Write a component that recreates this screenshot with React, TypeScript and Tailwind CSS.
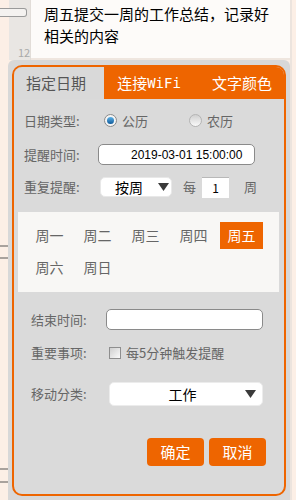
import React from "react";

const weekdays = ["周一", "周二", "周三", "周四", "周五", "周六", "周日"];

function Triangle() {
  return (
    <svg width="11" height="8" viewBox="0 0 11 8" className="shrink-0">
      <path d="M0 0 H11 L5.5 8 Z" fill="#3a3a3a" />
    </svg>
  );
}

function Radio({ checked }: { checked: boolean }) {
  return (
    <span
      className={`flex h-[13px] w-[13px] items-center justify-center rounded-full border ${
        checked ? "border-[#8a8a8a] bg-[#f4f4f4]" : "border-[#b4b4b4] bg-gradient-to-b from-[#d0d0d0] to-[#fafafa]"
      }`}
    >
      {checked && <span className="h-[7px] w-[7px] rounded-full bg-gradient-to-b from-[#5fb3e8] to-[#0b5a99]" />}
    </span>
  );
}

export default function App() {
  return (
    <div
      className="flex h-[500px] w-[296px] flex-col overflow-hidden bg-[#fcefe6]"
      style={{ fontFamily: '"Noto Sans CJK SC", "Liberation Sans", sans-serif' }}
    >
      {/* note row */}
      <div className="relative flex h-[60px] shrink-0">
        <div className="w-[9px] bg-[#fcefe6]" />
        <div className="flex w-[22px] flex-col justify-end border-r border-[#e2ddd8] bg-[#e9e6e3] pb-[1px] pl-[9px] text-[11px] leading-[14px] text-[#aaa]">
          12
        </div>
        <div className="flex-1 border-b-2 border-[#efe6df] bg-[#fdfbf9] pl-[13px] pt-[3px] text-[15px] leading-[22px] text-black">
          周五提交一周的工作总结，记录好
          <br />
          相关的内容
        </div>
        <div className="w-[6px] border-l-2 border-[#ece4de] bg-[#fcefe6]" />
        <div className="absolute left-0 top-[8px] h-[9px] w-[27px] rounded-r-[3px] border border-l-0 border-[#9a9a9a] bg-[#f4f2f0]" />
      </div>

      {/* dialog row */}
      <div className="flex flex-1">
        <div className="relative w-[8px] shrink-0">
          <div className="absolute left-0 top-[185px] h-[2px] w-[8px] bg-[#a9a29d]" />
          <div className="absolute left-0 top-[197px] h-[2px] w-[8px] bg-[#a9a29d]" />
          <div className="absolute left-0 top-[408px] h-[2px] w-[8px] bg-[#a9a29d]" />
          <div className="absolute left-0 top-[421px] h-[2px] w-[8px] bg-[#a9a29d]" />
        </div>
        <div className="flex flex-1 flex-col rounded-t-[6px] bg-[#d8d8d8] px-[4px] pb-[4px] pt-[5px]">
          <div className="flex flex-1 flex-col overflow-hidden rounded-[10px] border-2 border-[#ee6500] bg-[#dadada]">
            {/* tabs */}
            <div className="flex h-[32px] shrink-0 bg-[#ee6500] text-[15px]">
              <div className="flex w-[90px] items-center justify-center bg-[#d9d9d9] pr-[6px] text-[#555]">指定日期</div>
              <div className="flex w-[88px] items-center justify-center pl-[2px] text-white">
                连接<span style={{ fontFamily: '"DejaVu Sans Mono", monospace' }} className="text-[14px]">WiFi</span>
              </div>
              <div className="flex flex-1 items-center justify-center pl-[8px] text-white">文字颜色</div>
            </div>

            {/* body */}
            <div className="flex flex-1 flex-col text-[13px] text-[#666]">
              <div className="mt-[11px] flex h-[21px] items-center pl-[10px]">
                <span className="w-[80px]">日期类型:</span>
                <Radio checked />
                <span className="ml-[5px] w-[67px]">公历</span>
                <Radio checked={false} />
                <span className="ml-[5px]">农历</span>
              </div>

              <div className="mt-[13px] flex h-[21px] items-center pl-[10px]">
                <span className="w-[74px]">提醒时间:</span>
                <div
                  className="flex h-[21px] w-[157px] items-center rounded-[5px] border border-[#8a8a8a] bg-white pl-[32px] text-[12px] text-black"
                  style={{ fontFamily: '"Liberation Sans", sans-serif' }}
                >
                  2019-03-01 15:00:00
                </div>
              </div>

              <div className="mt-[12px] flex h-[20px] items-center pl-[10px]">
                <span className="w-[76px]">重复提醒:</span>
                <div className="flex h-[20px] w-[72px] items-center rounded-[5px] border border-[#e8e8e8] bg-white pl-[14px] pr-[2px] text-[14px] text-black">
                  <span className="flex-1">按周</span>
                  <Triangle />
                </div>
                <span className="ml-[11px]">每</span>
                <div className="ml-[6px] flex h-[21px] w-[27px] items-center justify-center border-t border-[#b8b8b8] bg-white text-[12px] text-black">
                  1
                </div>
                <span className="ml-[15px]">周</span>
              </div>

              {/* weekday panel */}
              <div className="ml-[4px] mr-[5px] mt-[15px] grid h-[80px] grid-cols-[repeat(5,43px)] content-start gap-x-[5px] gap-y-[5px] bg-[#f8f7f5] pl-[10px] pt-[10px]">
                {weekdays.map((d) => (
                  <div
                    key={d}
                    className={`flex h-[27px] items-center justify-center text-[14px] ${
                      d === "周五" ? "bg-[#ee6500] text-white" : "text-[#666]"
                    }`}
                  >
                    {d}
                  </div>
                ))}
              </div>

              <div className="mt-[17px] flex h-[21px] items-center pl-[17px]">
                <span className="w-[75px]">结束时间:</span>
                <div className="h-[21px] w-[157px] rounded-[5px] border border-[#8a8a8a] bg-white" />
              </div>

              <div className="mt-[12px] flex h-[21px] items-center pl-[17px]">
                <span className="w-[78px]">重要事项:</span>
                <span className="h-[12px] w-[12px] border border-[#8e8e8e] bg-gradient-to-br from-[#cfcfcf] to-[#fbfbfb]" />
                <span className="ml-[5px]">每5分钟触发提醒</span>
              </div>

              <div className="mt-[19px] flex h-[24px] items-center pl-[17px]">
                <span className="w-[78px]">移动分类:</span>
                <div className="flex h-[24px] w-[154px] items-center rounded-[5px] border border-[#ececec] bg-white pr-[6px] text-[14px] text-black">
                  <span className="flex-1 pl-[10px] text-center">工作</span>
                  <Triangle />
                </div>
              </div>

              <div className="mt-[32px] flex justify-end gap-[5px] pr-[18px]">
                <button className="h-[28px] w-[57px] rounded-[4px] bg-[#ee6500] text-[15px] text-white">确定</button>
                <button className="h-[28px] w-[57px] rounded-[4px] bg-[#ee6500] text-[15px] text-white">取消</button>
              </div>
            </div>
          </div>
        </div>
        <div className="w-[6px] shrink-0 border-l-2 border-[#ece4de]" />
      </div>
    </div>
  );
}
